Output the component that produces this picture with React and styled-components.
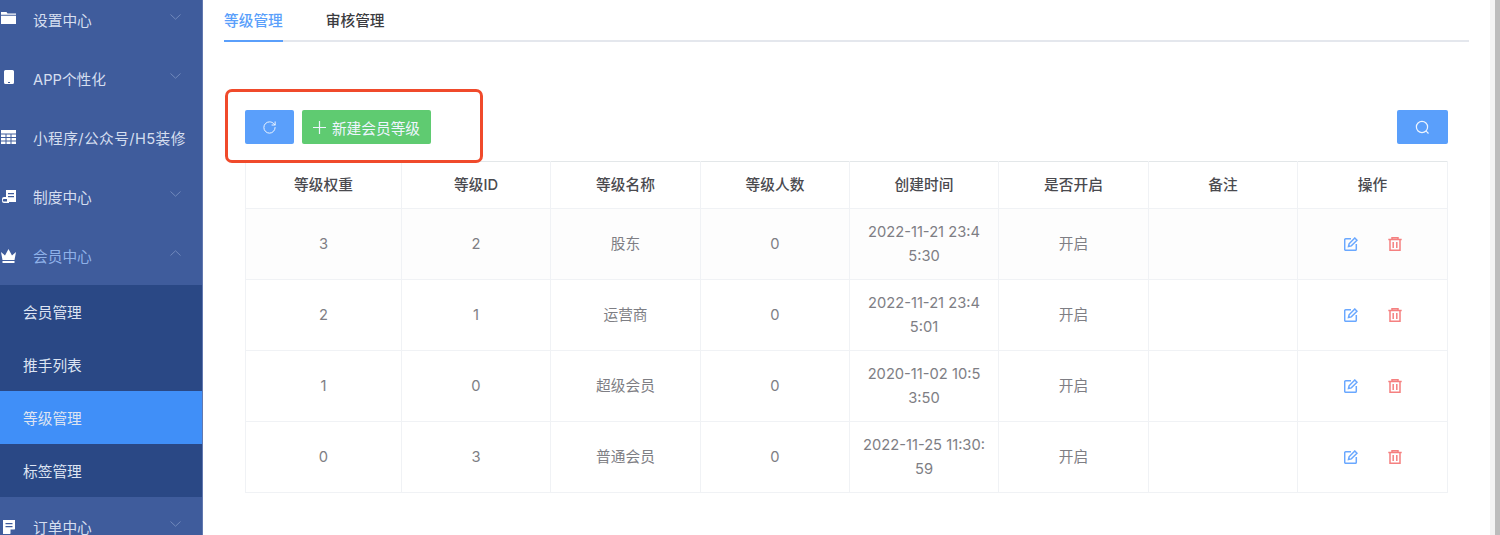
import styled, { createGlobalStyle } from "styled-components";
import { RotateCw } from "lucide-react";

const GlobalStyle = createGlobalStyle`
  html, body {
    margin: 0;
    padding: 0;
    height: 535px;
    overflow: hidden;
    background: #fff;
    font-family: "Inter", "Noto Sans CJK SC", sans-serif;
  }
  * { box-sizing: border-box; }
`;

const Page = styled.div`
  display: flex;
  width: 1500px;
  height: 535px;
  overflow: hidden;
`;

const Sidebar = styled.aside`
  flex: 0 0 203px;
  height: 535px;
  overflow: hidden;
  background: #3f5c9c;
  border-right: 1px solid #6279b0;
`;

const Menu = styled.div`
  margin-top: -10px;
`;

const MenuItem = styled.div`
  display: flex;
  align-items: center;
  height: 59px;
  padding-right: 21px;
  font-size: 14.7px;
  color: ${(p) => (p.$open ? "#8fb1e8" : "#d5deef")};
`;

const MenuIcon = styled.svg`
  flex: 0 0 17px;
  width: 17px;
  height: 17px;
  margin-right: 16px;
  fill: #fff;
`;

const MenuLabel = styled.span`
  flex: 1;
  white-space: nowrap;
  padding-bottom: 1px;
  letter-spacing: ${(p) => (p.$wide ? "0.4px" : "0")};
`;

const Chevron = styled.svg`
  width: 11px;
  height: 6px;
  margin-bottom: 6px;
  fill: none;
  stroke: #7189bb;
  stroke-width: 1;
`;

const SubItem = styled.div`
  display: flex;
  align-items: center;
  height: 53px;
  padding-left: 23px;
  font-size: 14.7px;
  color: #dde4f2;
  background: ${(p) => (p.$active ? "#408ff8" : "#2a4885")};
`;

const Main = styled.main`
  flex: 1;
  min-width: 0;
  padding: 0 21px 0 21px;
`;

const Tabs = styled.nav`
  display: flex;
  gap: 43px;
  height: 42px;
  border-bottom: 2px solid #e4e7ed;
`;

const Tab = styled.div`
  height: 42px;
  line-height: 42px;
  font-size: 14.7px;
  font-weight: 500;
  color: ${(p) => (p.$active ? "#5a9ffb" : "#3b3b3f")};
  border-bottom: 2px solid ${(p) => (p.$active ? "#5a9ffb" : "transparent")};
`;

const Panel = styled.section`
  padding: 68px 21px 0;
`;

const Toolbar = styled.div`
  position: relative;
  display: flex;
  align-items: center;
  gap: 8px;
  height: 34px;
  margin-bottom: 17px;
`;

const Button = styled.button`
  display: flex;
  align-items: center;
  justify-content: center;
  gap: 6px;
  height: 34px;
  padding: 0 10px;
  border: 0;
  border-radius: 2px;
  color: #eef5ff;
  font: inherit;
  font-size: 14.7px;
  background: ${(p) => (p.$green ? "#5fcb71" : "#5a9ffb")};
  width: ${(p) => p.$width}px;
  margin-left: ${(p) => (p.$push ? "auto" : "0")};
`;

const Highlight = styled.div`
  position: absolute;
  left: -20px;
  top: -21px;
  width: 258px;
  height: 74px;
  border: 3px solid #f04a2b;
  border-radius: 7px;
  pointer-events: none;
`;

const Table = styled.table`
  width: 1202px;
  border-collapse: collapse;
  table-layout: fixed;
  font-size: 14.7px;
`;

const Head = styled.th`
  height: 47px;
  padding: 0 0 3px;
  font-weight: 500;
  color: #4a4a4f;
  border: 1px solid #f0f2f5;
  border-top-color: #e3e7e9;
  width: ${(p) => p.$width}px;
`;

const Row = styled.tr`
  background: ${(p) => (p.$tinted ? "#fdfdfd" : "#fff")};
`;

const Cell = styled.td`
  height: 71px;
  padding: 0;
  text-align: center;
  line-height: 24px;
  color: #7e7e84;
  border: 1px solid #f0f2f5;
`;

const TimeLine = styled.span`
  display: block;
`;

const Actions = styled.div`
  display: flex;
  justify-content: center;
  gap: 30px;
`;

const ActionIcon = styled.svg`
  width: 14px;
  height: 14px;
  fill: none;
  stroke: ${(p) => p.$color};
  stroke-width: 1.5;
`;

const Scrollbar = styled.div`
  flex: 0 0 10px;
  border-left: 5px solid #f3f3f3;
  background: #bcbcbc;
`;

const icons = {
  folder: <path d="M1 1h5.500l1 1.500H16v1.200H1zM1 4.700h15V13H1z" />,
  mobile: <path fillRule="evenodd" d="M5.500 0h7A1.500 1.500 0 0 1 14 1.500v11a1.500 1.500 0 0 1-1.500 1.500h-7A1.500 1.500 0 0 1 4 12.500v-11A1.500 1.500 0 0 1 5.500 0zM8 12v1h2v-1z" />,
  table: <path d="M1 1h15v3.500H1zM1 5.500h4.500V8H1zM6.500 5.500h4V8h-4zM11.500 5.500H16V8h-4.500zM1 9h4.500v2.500H1zM6.500 9h4v2.500h-4zM11.500 9H16v2.500h-4.500zM1 12.500h4.500V15H1zM6.500 12.500h4V15h-4zM11.500 12.500H16V15h-4.500z" />,
  book: <path fillRule="evenodd" d="M6 2h10v12H9v1H4a2 2 0 0 1-2-2v-2a2 2 0 0 1 2-2h2zm2 3v1.200h6V5zm0 3v1.200h6V8zm-4 3a1.200 1.200 0 0 0 0 2.500h3V11z" />,
  crown: <path d="M1 5l4 3.500L8.500 2 12 8.500 16 5l-1.500 8h-12zM2.500 14h12v2h-12z" />,
  order: <path fillRule="evenodd" d="M3 2h12v9l-5 5H3zm2.500 3v1.200h7V5zm0 3v1.200h7V8zm5 7.500l4-4h-4z" />,
};

const topMenu = [
  { label: "设置中心", icon: "folder" },
  { label: "APP个性化", icon: "mobile" },
  { label: "小程序/公众号/H5装修", icon: "table", bare: true },
  { label: "制度中心", icon: "book" },
];

const subMenu = ["会员管理", "推手列表", "等级管理", "标签管理"];

const columns = [
  ["等级权重", 156],
  ["等级ID", 149],
  ["等级名称", 150],
  ["等级人数", 149],
  ["创建时间", 149],
  ["是否开启", 150],
  ["备注", 149],
  ["操作", 150],
];

const rows = [
  { weight: 3, id: 2, name: "股东", time: ["2022-11-21 23:4", "5:30"] },
  { weight: 2, id: 1, name: "运营商", time: ["2022-11-21 23:4", "5:01"] },
  { weight: 1, id: 0, name: "超级会员", time: ["2020-11-02 10:5", "3:50"] },
  { weight: 0, id: 3, name: "普通会员", time: ["2022-11-25 11:30:", "59"] },
];

const Arrow = ({ up }) => (
  <Chevron viewBox="0 0 11 6">
    <path d={up ? "M.5 5.500L5.500 .8l5 4.700" : "M.5 .5l5 4.700 5-4.700"} />
  </Chevron>
);

const Item = ({ label, icon, bare, open }) => (
  <MenuItem $open={open}>
    <MenuIcon viewBox="0 0 17 17">{icons[icon]}</MenuIcon>
    <MenuLabel $wide={bare}>{label}</MenuLabel>
    {!bare && <Arrow up={open} />}
  </MenuItem>
);

const EditIcon = () => (
  <ActionIcon viewBox="0 0 14 14" $color="#6aa8ff">
    <path d="M7 1.700H1.700a1 1 0 0 0-1 1v9.600a1 1 0 0 0 1 1h9.600a1 1 0 0 0 1-1V7" />
    <path d="M4.500 9.500l.6-2.700L10.800 1l2.200 2.200-5.700 5.700z" />
  </ActionIcon>
);

const TrashIcon = () => (
  <ActionIcon viewBox="0 0 14 14" $color="#f58080">
    <path d="M.3 2.500h13.400M4 2.500V.8h6v1.700M2 2.500v10.800h10V2.500M5.200 5v6M8.800 5v6" />
  </ActionIcon>
);

const PlusIcon = () => (
  <svg width="13" height="13" viewBox="0 0 13 13" fill="none" stroke="#eef5ff" strokeWidth="1.200">
    <path d="M6.500 0v13M0 6.500h13" />
  </svg>
);

const SearchIcon = () => (
  <svg width="15" height="15" viewBox="0 0 15 15" fill="none" stroke="#eef5ff" strokeWidth="1.200">
    <circle cx="7" cy="7" r="5.600" />
    <path d="M11.200 11.200l2.300 2.300" />
  </svg>
);

export default function App() {
  return (
    <>
      <GlobalStyle />
      <Page>
        <Sidebar>
          <Menu>
            {topMenu.map((item) => (
              <Item key={item.label} {...item} />
            ))}
            <Item label="会员中心" icon="crown" open />
            {subMenu.map((label) => (
              <SubItem key={label} $active={label === "等级管理"}>
                {label}
              </SubItem>
            ))}
            <Item label="订单中心" icon="order" />
          </Menu>
        </Sidebar>
        <Main>
          <Tabs>
            <Tab $active>等级管理</Tab>
            <Tab>审核管理</Tab>
          </Tabs>
          <Panel>
            <Toolbar>
              <Button $width={49} aria-label="刷新">
                <RotateCw size={15} strokeWidth={1.6} />
              </Button>
              <Button $green $width={129}>
                <PlusIcon />
                新建会员等级
              </Button>
              <Button $push $width={51} aria-label="搜索">
                <SearchIcon />
              </Button>
              <Highlight />
            </Toolbar>
            <Table>
              <thead>
                <tr>
                  {columns.map(([title, width]) => (
                    <Head key={title} $width={width}>
                      {title}
                    </Head>
                  ))}
                </tr>
              </thead>
              <tbody>
                {rows.map((row, i) => (
                  <Row key={row.id} $tinted={i === 0}>
                    <Cell>{row.weight}</Cell>
                    <Cell>{row.id}</Cell>
                    <Cell>{row.name}</Cell>
                    <Cell>0</Cell>
                    <Cell>
                      {row.time.map((line) => (
                        <TimeLine key={line}>{line}</TimeLine>
                      ))}
                    </Cell>
                    <Cell>开启</Cell>
                    <Cell />
                    <Cell>
                      <Actions>
                        <EditIcon />
                        <TrashIcon />
                      </Actions>
                    </Cell>
                  </Row>
                ))}
              </tbody>
            </Table>
          </Panel>
        </Main>
        <Scrollbar />
      </Page>
    </>
  );
}
